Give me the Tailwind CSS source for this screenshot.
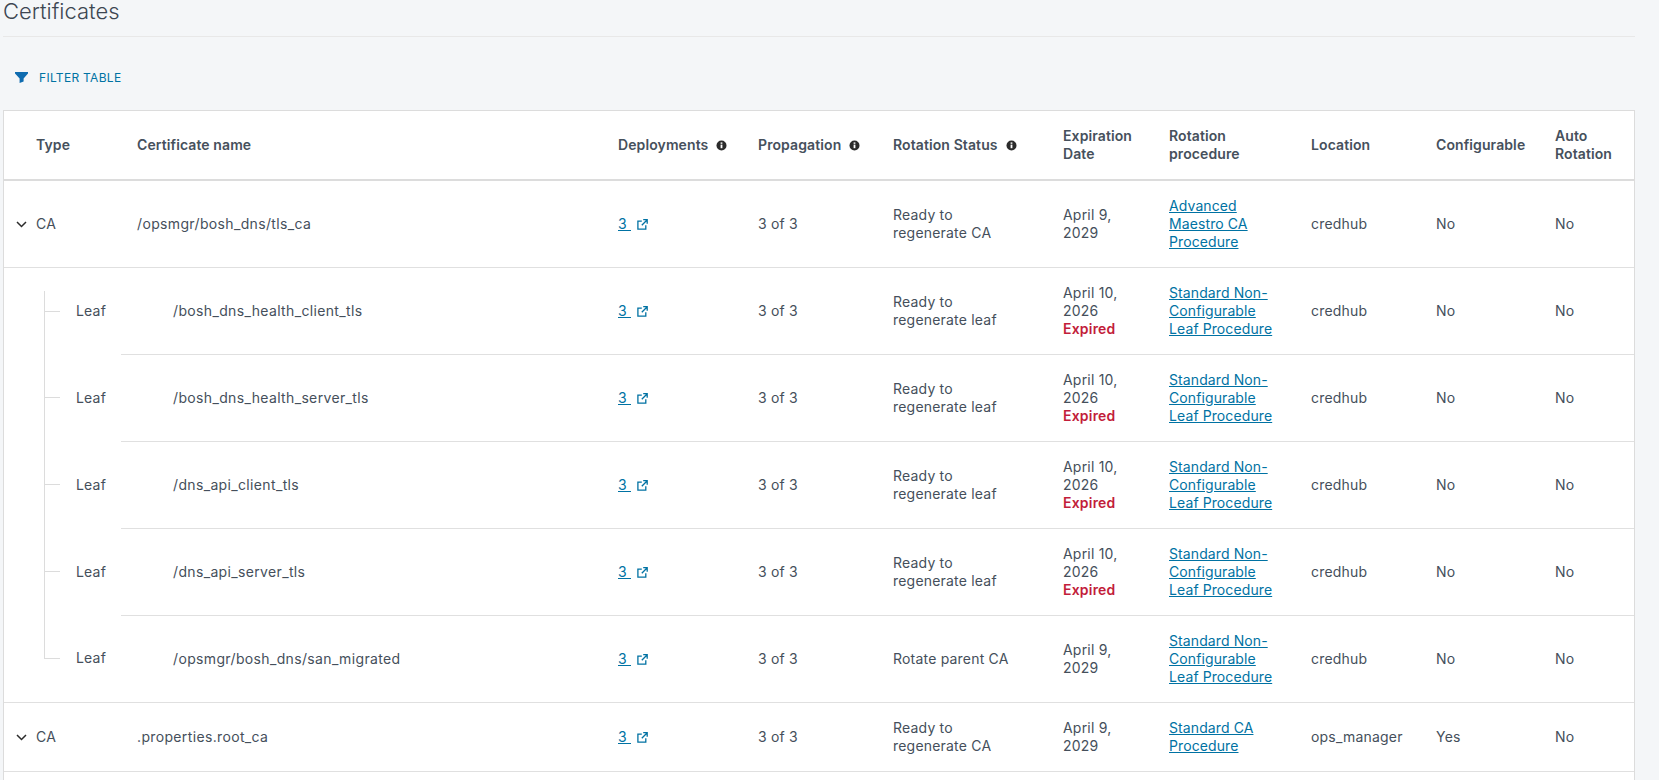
<!DOCTYPE html>
<html lang="en">
<head>
<meta charset="UTF-8">
<title>Certificates</title>
<script src="https://cdn.jsdelivr.net/npm/@tailwindcss/browser@4"></script>
</head>
<body class="bg-[#f4f6f8] h-[780px] overflow-hidden font-['Inter',sans-serif] text-[14px] tracking-[0.2px] leading-[18px] text-[#454f5b]">
<div class="pl-[3px] pr-6">
  <!-- header -->
  <h1 class="h-[37px] border-b border-[#e8e8e8] text-[22px] tracking-normal leading-[22px] text-[#3d4652] font-light">Certificates</h1>
  <div class="h-[73px] flex items-center pl-3 pt-[8px] gap-[11px] text-[#0072a3] text-[12px] tracking-[0.3px]">
    <svg class="w-[13px] h-[11px]" viewBox="0 0 13 11"><path fill="#0f6cb0" d="M0 0h13v1.6L8.6 6.4V9.6L4.6 11V6.4L0 1.6z"/></svg>
    <span>FILTER TABLE</span>
  </div>

  <!-- table -->
  <div class="bg-white border border-[#dcdcdc] border-b-0 h-[700px]">
    <table class="w-full table-fixed border-collapse">
      <colgroup>
        <col class="w-[133px]"><col class="w-[481px]"><col class="w-[140px]"><col class="w-[135px]"><col class="w-[170px]"><col class="w-[106px]"><col class="w-[142px]"><col class="w-[125px]"><col class="w-[119px]"><col>
      </colgroup>
      <thead>
        <tr class="h-[69px] border-b-2 border-[#dcdcdc] text-left text-[#46505c] tracking-[0.1px]">
          <th class="pl-8 font-semibold">Type</th>
          <th class="font-semibold">Certificate name</th>
          <th class="font-semibold"><span class="inline-flex items-center gap-2">Deployments <svg class="w-[11px] h-[11px] mt-px" viewBox="0 0 11 11"><circle cx="5.5" cy="5.5" r="5" fill="#2b2b2b"/><rect x="4.6" y="4.6" width="1.8" height="3.6" fill="#fff"/><rect x="4.6" y="2.4" width="1.8" height="1.4" fill="#fff"/></svg></span></th>
          <th class="font-semibold"><span class="inline-flex items-center gap-2">Propagation <svg class="w-[11px] h-[11px] mt-px" viewBox="0 0 11 11"><circle cx="5.5" cy="5.5" r="5" fill="#2b2b2b"/><rect x="4.6" y="4.6" width="1.8" height="3.6" fill="#fff"/><rect x="4.6" y="2.4" width="1.8" height="1.4" fill="#fff"/></svg></span></th>
          <th class="font-semibold"><span class="inline-flex items-center gap-2">Rotation Status <svg class="w-[11px] h-[11px] mt-px" viewBox="0 0 11 11"><circle cx="5.5" cy="5.5" r="5" fill="#2b2b2b"/><rect x="4.6" y="4.6" width="1.8" height="3.6" fill="#fff"/><rect x="4.6" y="2.4" width="1.8" height="1.4" fill="#fff"/></svg></span></th>
          <th class="font-semibold">Expiration<br>Date</th>
          <th class="font-semibold">Rotation<br>procedure</th>
          <th class="font-semibold">Location</th>
          <th class="font-semibold">Configurable</th>
          <th class="font-semibold">Auto<br>Rotation</th>
        </tr>
      </thead>
      <tbody id="rows"></tbody>
    </table>
  </div>
</div>
<script>
  const link = 'text-[#0072a3] underline';
  const ext = `<a class="${link}">3&nbsp;</a><svg class="inline-block ml-[6px] w-[11px] h-[11px] align-[-1px]" viewBox="0 0 11 11" fill="none" stroke="#0072a3" stroke-width="1.3"><path d="M8.8 6.2v3.9H.9V2.2h3.9M6.2.7h4v4M10 1 4.8 6.2"/></svg>`;
  const chevron = `<svg class="absolute left-3 top-1/2 -mt-[3px] w-[11px] h-[7px]" viewBox="0 0 11 7" fill="none" stroke="#2b2b2b" stroke-width="1.5"><path d="M1 1l4.5 4.5L10 1"/></svg>`;

  function procedure(lines) {
    return lines.map(l => `<a class="${link}">${l}</a>`).join('<br>');
  }

  function caRow(name, status, proc, location, conf, height) {
    return `<tr class="${height} border-b border-[#e0e0e0]">
      <td class="relative pl-8">${chevron}CA</td>
      <td class="tracking-[0.35px]">${name}</td><td>${ext}</td><td>3 of 3</td><td>${status}</td>
      <td>April 9,<br>2029</td><td class="tracking-[0.1px]">${procedure(proc)}</td><td>${location}</td><td>${conf}</td><td>No</td>
    </tr>`;
  }

  function leafRow(name, status, date, last, first) {
    // tree lines sit in the type cell, the row rule starts just before its right edge
    const rule = last ? '' : 'border-b border-[#e0e0e0]';
    const vertical = first
      ? 'top-[23px] bottom-0'
      : last ? 'top-0 h-[44px]' : 'top-0 bottom-0';
    const stub = last ? '' : '<span class="absolute left-[117px] right-0 bottom-[-1px] h-px bg-[#e0e0e0]"></span>';
    return `<tr class="h-[87px] ${last ? 'border-b border-[#e0e0e0]' : ''}">
      <td class="relative pl-[72px]">
        <span class="absolute left-[40px] w-px bg-[#dcdcdc] ${vertical}"></span>
        <span class="absolute left-[40px] top-[43px] w-[16px] h-px bg-[#dcdcdc]"></span>
        ${stub}
        Leaf
      </td>
      <td class="pl-9 tracking-[0.35px] ${rule}">${name}</td><td class="${rule}">${ext}</td><td class="${rule}">3 of 3</td><td class="${rule}">${status}</td>
      <td class="${rule}">${date}</td><td class="tracking-[0.1px] ${rule}">${procedure(['Standard Non-', 'Configurable', 'Leaf Procedure'])}</td>
      <td class="${rule}">credhub</td><td class="${rule}">No</td><td class="${rule}">No</td>
    </tr>`;
  }

  const expired = 'April 10,<br>2026<br><span class="text-[#c21d3a] font-semibold">Expired</span>';
  const readyLeaf = 'Ready to<br>regenerate leaf';

  document.getElementById('rows').innerHTML = [
    caRow('/opsmgr/bosh_dns/tls_ca', 'Ready to<br>regenerate CA', ['Advanced', 'Maestro CA', 'Procedure'], 'credhub', 'No', 'h-[87px]'),
    leafRow('/bosh_dns_health_client_tls', readyLeaf, expired, false, true),
    leafRow('/bosh_dns_health_server_tls', readyLeaf, expired),
    leafRow('/dns_api_client_tls', readyLeaf, expired),
    leafRow('/dns_api_server_tls', readyLeaf, expired),
    leafRow('/opsmgr/bosh_dns/san_migrated', 'Rotate parent CA', 'April 9,<br>2029', true),
    caRow('.properties.root_ca', 'Ready to<br>regenerate CA', ['Standard CA', 'Procedure'], 'ops_manager', 'Yes', 'h-[69px]'),
  ].join('');
</script>
</body>
</html>
